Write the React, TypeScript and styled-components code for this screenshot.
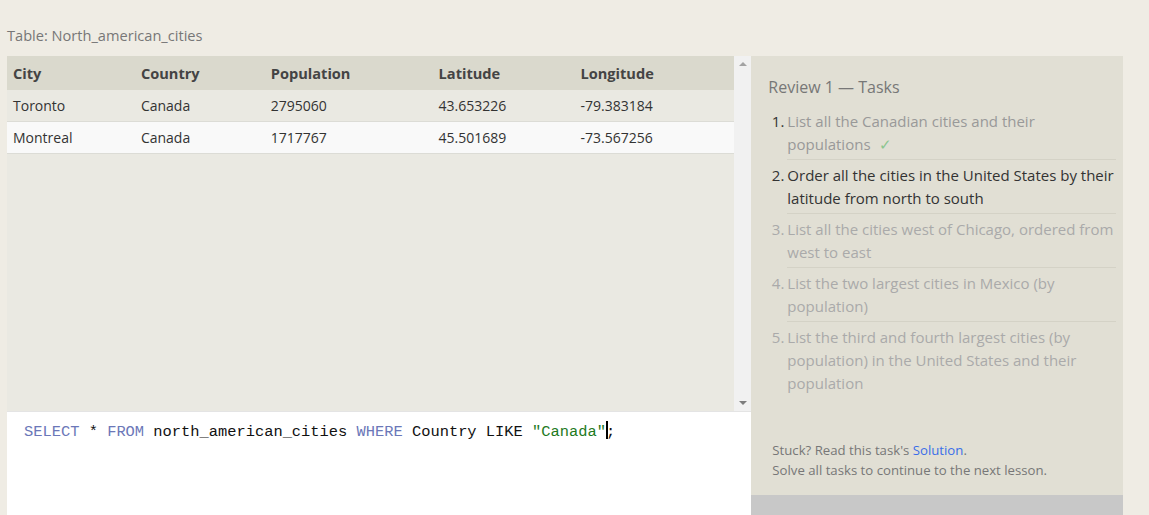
import styled, { createGlobalStyle } from 'styled-components';

const rows = [
  { city: 'Toronto', country: 'Canada', population: '2795060', latitude: '43.653226', longitude: '-79.383184' },
  { city: 'Montreal', country: 'Canada', population: '1717767', latitude: '45.501689', longitude: '-73.567256' },
];

const columns = [
  { key: 'city', label: 'City', width: 116 },
  { key: 'country', label: 'Country', width: 118 },
  { key: 'population', label: 'Population', width: 156 },
  { key: 'latitude', label: 'Latitude', width: 130 },
  { key: 'longitude', label: 'Longitude', width: 148 },
] as const;

const tasks = [
  { text: 'List all the Canadian cities and their populations', state: 'done' },
  { text: 'Order all the cities in the United States by their latitude from north to south', state: 'current' },
  { text: 'List all the cities west of Chicago, ordered from west to east', state: 'todo' },
  { text: 'List the two largest cities in Mexico (by population)', state: 'todo' },
  { text: 'List the third and fourth largest cities (by population) in the United States and their population', state: 'todo' },
] as const;

type TaskState = 'done' | 'current' | 'todo';

const GlobalStyle = createGlobalStyle`
  html, body {
    margin: 0;
    padding: 0;
    background: #efece4;
    font-family: 'Open Sans', 'Noto Sans', sans-serif;
  }
`;

function App() {
  return (
    <>
      <GlobalStyle />
      <Page>
        <TableTitle>Table: North_american_cities</TableTitle>
        <Workspace>
          <LeftColumn>
            <TableArea>
              <TableScroll>
                <DataTable>
                  <thead>
                    <tr>
                      {columns.map((c) => (
                        <HeadCell key={c.key} $width={c.width}>
                          {c.label}
                        </HeadCell>
                      ))}
                    </tr>
                  </thead>
                  <tbody>
                    {rows.map((r, i) => (
                      <BodyRow key={r.city} $odd={i % 2 === 1}>
                        {columns.map((c) => (
                          <Cell key={c.key}>{r[c.key]}</Cell>
                        ))}
                      </BodyRow>
                    ))}
                  </tbody>
                </DataTable>
              </TableScroll>
              <Scrollbar>
                <Arrow $dir="up" />
                <Arrow $dir="down" />
              </Scrollbar>
            </TableArea>
            <Editor>
              <Code>
                <Kw>SELECT</Kw> * <Kw>FROM</Kw> north_american_cities <Kw>WHERE</Kw> Country LIKE{' '}
                <Str>"Canada"</Str>
                <Caret />;
              </Code>
            </Editor>
          </LeftColumn>

          <Sidebar>
            <TaskBox>
              <TaskHeading>Review 1 — Tasks</TaskHeading>
              <TaskList>
                {tasks.map((t, i) => (
                  <TaskItem key={i} $state={t.state}>
                    <TaskNum $state={t.state}>{i + 1}.</TaskNum>
                    <TaskText $last={i === tasks.length - 1}>
                      {t.text}
                      {t.state === 'done' && <Check>✓</Check>}
                    </TaskText>
                  </TaskItem>
                ))}
              </TaskList>
              <Hint>
                Stuck? Read this task's <HintLink>Solution</HintLink>.
                <br />
                Solve all tasks to continue to the next lesson.
              </Hint>
            </TaskBox>
            <NextBar />
          </Sidebar>
        </Workspace>
      </Page>
    </>
  );
}

const Page = styled.div`
  padding: 25px 26px 0 7px;
  height: 515px;
  box-sizing: border-box;
  display: flex;
  flex-direction: column;
`;

const TableTitle = styled.div`
  font-size: 14.6px;
  color: #777;
  line-height: 20px;
  margin-bottom: 11px;
`;

const Workspace = styled.div`
  display: flex;
  flex: 1;
  min-height: 0;
`;

const LeftColumn = styled.div`
  width: 745px;
  display: flex;
  flex-direction: column;
`;

const TableArea = styled.div`
  height: 355px;
  flex: none;
  display: flex;
  background: #eae9e2;
`;

const TableScroll = styled.div`
  flex: 1;
`;

const DataTable = styled.table`
  width: 100%;
  border-collapse: collapse;
  font-size: 14px;
  color: #333;
`;

const HeadCell = styled.th<{ $width: number }>`
  width: ${(p) => p.$width}px;
  text-align: left;
  font-weight: 700;
  font-size: 14.6px;
  background: #dad9cd;
  height: 34px;
  padding: 0 6px;
  color: #444;
`;

const BodyRow = styled.tr<{ $odd: boolean }>`
  background: ${(p) => (p.$odd ? '#f9f9f9' : '#eae9e2')};
  border-bottom: 1px solid #dcdcd6;
`;

const Cell = styled.td`
  height: 31px;
  padding: 0 6px;
`;

const Scrollbar = styled.div`
  width: 17px;
  background: #f1f1f1;
  display: flex;
  flex-direction: column;
  justify-content: space-between;
  align-items: center;
  padding: 6px 0;
  box-sizing: border-box;
`;

const Arrow = styled.div<{ $dir: 'up' | 'down' }>`
  width: 0;
  height: 0;
  border-left: 4px solid transparent;
  border-right: 4px solid transparent;
  ${(p) =>
    p.$dir === 'up'
      ? 'border-bottom: 4px solid #a3a3a3;'
      : 'border-top: 4px solid #7d7d7d;'}
`;

const Editor = styled.div`
  flex: 1;
  background: #fff;
  border-top: 1px solid #e4e4e4;
  padding: 9px 17px;
`;

const Code = styled.div`
  font-family: 'Liberation Mono', 'DejaVu Sans Mono', monospace;
  font-size: 15.4px;
  line-height: 22px;
  color: #111;
  white-space: pre;
`;

const Kw = styled.span`
  color: #6b77b8;
`;

const Str = styled.span`
  color: #1e7a1e;
`;

const Caret = styled.span`
  display: inline-block;
  width: 2px;
  height: 18px;
  background: #000;
  vertical-align: -3px;
  margin-right: -2px;
`;

const Sidebar = styled.div`
  width: 372px;
  display: flex;
  flex-direction: column;
`;

const TaskBox = styled.div`
  flex: 1;
  background: #e1dfd4;
  padding: 20px 7px 0 17px;
  display: flex;
  flex-direction: column;
`;

const TaskHeading = styled.div`
  font-size: 16px;
  color: #777;
  line-height: 22px;
  margin-bottom: 12px;
`;

const TaskList = styled.ol`
  list-style: none;
  margin: 0;
  padding: 0;
`;

const taskColor = (s: TaskState) => (s === 'done' ? '#999' : s === 'current' ? '#333' : '#aaa');

const TaskItem = styled.li<{ $state: TaskState }>`
  display: flex;
  gap: 3px;
  font-size: 15px;
  line-height: 23px;
  color: ${(p) => taskColor(p.$state)};
`;

const TaskNum = styled.span<{ $state: TaskState }>`
  width: 16px;
  flex: none;
  text-align: right;
  color: ${(p) => (p.$state === 'current' || p.$state === 'done' ? '#333' : '#aaa')};
`;

const TaskText = styled.span<{ $last: boolean }>`
  flex: 1;
  padding: 0 0 3px 0;
  margin-bottom: 4px;
  border-bottom: ${(p) => (p.$last ? 'none' : '1px solid #d4d2c6')};
`;

const Check = styled.span`
  color: #8bc58f;
  margin-left: 8px;
`;

const Hint = styled.div`
  margin-top: auto;
  margin-bottom: 15px;
  padding-left: 4px;
  font-size: 13.2px;
  line-height: 20px;
  color: #777;
`;

const HintLink = styled.span`
  color: #3a6ee8;
`;

const NextBar = styled.div`
  height: 20px;
  background: #c8c8c8;
`;

export default App;
